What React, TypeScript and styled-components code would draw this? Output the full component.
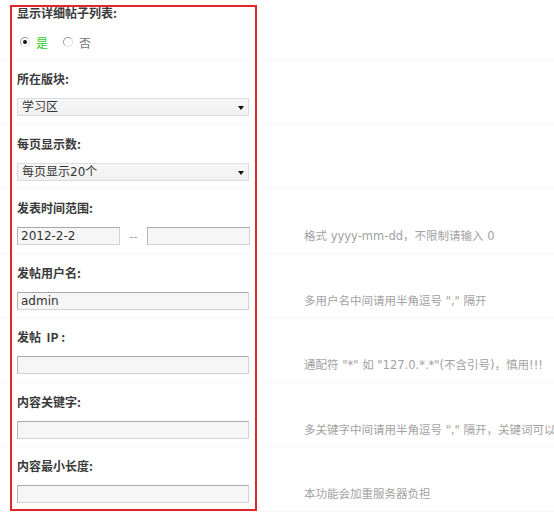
import React from 'react';
import styled, { createGlobalStyle } from 'styled-components';

const GlobalStyle = createGlobalStyle`
  html, body {
    margin: 0;
    padding: 0;
    background: #fff;
    overflow: hidden;
  }
  body {
    font-family: "DejaVu Sans", "Noto Sans CJK SC", sans-serif;
    font-size: 12px;
    color: #333;
  }
`;

type Field = {
  label: string;
  kind: 'radio' | 'select' | 'range' | 'text';
  value?: string;
  hint?: string;
};

const fields: Field[] = [
  { label: '显示详细帖子列表:', kind: 'radio' },
  { label: '所在版块:', kind: 'select', value: '学习区' },
  { label: '每页显示数:', kind: 'select', value: '每页显示20个' },
  { label: '发表时间范围:', kind: 'range', value: '2012-2-2', hint: '格式 yyyy-mm-dd，不限制请输入 0' },
  { label: '发帖用户名:', kind: 'text', value: 'admin', hint: '多用户名中间请用半角逗号 "," 隔开' },
  { label: '发帖  IP :', kind: 'text', hint: '通配符 "*" 如 "127.0.*.*"(不含引号)，慎用!!!' },
  { label: '内容关键字:', kind: 'text', hint: '多关键字中间请用半角逗号 "," 隔开，关键词可以用通配符 "*"' },
  { label: '内容最小长度:', kind: 'text', hint: '本功能会加重服务器负担' },
];

export default function App() {
  return (
    <>
      <GlobalStyle />
      <Page>
        <Table>
          {fields.map((f, i) => (
            <Row key={f.label} $first={i === 0}>
              <Label>{f.label}</Label>
              <Control>
                {f.kind === 'radio' && (
                  <RadioGroup>
                    <RadioLabel $active>
                      <Radio type="radio" name="detail" defaultChecked />
                      是
                    </RadioLabel>
                    <RadioLabel>
                      <Radio type="radio" name="detail" />
                      否
                    </RadioLabel>
                  </RadioGroup>
                )}
                {f.kind === 'select' && (
                  <SelectWrap>
                    <Select defaultValue={f.value}>
                      <option>{f.value}</option>
                    </Select>
                  </SelectWrap>
                )}
                {f.kind === 'range' && (
                  <RangeRow>
                    <TextInput $width={103} defaultValue={f.value} />
                    <Dash>--</Dash>
                    <TextInput $width={103} />
                  </RangeRow>
                )}
                {f.kind === 'text' && <TextInput $width={232} defaultValue={f.value} />}
              </Control>
              {f.hint && <Hint>{f.hint}</Hint>}
            </Row>
          ))}
        </Table>
        <Highlight />
      </Page>
    </>
  );
}

const Page = styled.div`
  position: relative;
  width: 554px;
  height: 513px;
  overflow: hidden;
`;

const Table = styled.div`
  display: flex;
  flex-direction: column;
`;

const Row = styled.div<{ $first?: boolean }>`
  display: grid;
  grid-template-columns: 257px 1fr;
  grid-template-rows: 20px 18px;
  row-gap: ${({ $first }) => ($first ? '10px' : '9px')};
  padding: ${({ $first }) => ($first ? '3px 0 8px 0' : '9px 0 7.5px 0')};
  border-bottom: 1px solid #f8f8f8;
`;

const Label = styled.div`
  grid-column: 1;
  grid-row: 1;
  padding-left: 17px;
  line-height: 20px;
  font-family: "Noto Sans CJK SC", sans-serif;
  font-weight: bold;
  font-size: 12px;
  color: #3a3a3a;
  white-space: pre;
`;

const Control = styled.div`
  grid-column: 1;
  grid-row: 2;
  padding-left: 17px;
  display: flex;
  align-items: center;
`;

const Hint = styled.div`
  grid-column: 2;
  grid-row: 2;
  padding-left: 47px;
  line-height: 18px;
  font-family: "DejaVu Sans", "Noto Sans CJK SC", sans-serif;
  font-size: 11.5px;
  color: #a2a2a2;
  white-space: nowrap;
`;

const RadioGroup = styled.div`
  display: flex;
  align-items: center;
  gap: 15px;
  padding-left: 3px;
`;

const RadioLabel = styled.label<{ $active?: boolean }>`
  display: flex;
  align-items: center;
  gap: 6px;
  font-family: "Noto Sans CJK SC", sans-serif;
  font-size: 12px;
  color: ${({ $active }) => ($active ? '#2ecc2e' : '#777')};
`;

const Radio = styled.input`
  appearance: none;
  margin: 0;
  width: 10px;
  height: 10px;
  border-radius: 50%;
  border: 1px solid #9a9a9a;
  border-right-color: #e0e0e0;
  border-bottom-color: #e0e0e0;
  background: #fff;
  position: relative;

  &:checked::after {
    content: '';
    position: absolute;
    left: 2px;
    top: 2px;
    width: 4px;
    height: 4px;
    border-radius: 50%;
    background: #111;
  }
`;

const SelectWrap = styled.div`
  position: relative;
  width: 232px;
  height: 18px;

  &::after {
    content: '';
    position: absolute;
    right: 5px;
    top: 8px;
    border-left: 3px solid transparent;
    border-right: 3px solid transparent;
    border-top: 4px solid #111;
    pointer-events: none;
  }
`;

const Select = styled.select`
  appearance: none;
  width: 100%;
  height: 18px;
  margin: 0;
  padding: 0 0 0 4px;
  box-sizing: border-box;
  border: 1px solid #dcdcdc;
  border-radius: 0;
  background: linear-gradient(#f7f7f7, #f1f1f1);
  font-family: "DejaVu Sans", "Noto Sans CJK SC", sans-serif;
  font-size: 12px;
  color: #333;
  outline: none;
`;

const RangeRow = styled.div`
  display: flex;
  align-items: center;
`;

const Dash = styled.span`
  width: 27px;
  text-align: center;
  color: #999;
  font-size: 11px;
`;

const TextInput = styled.input<{ $width: number }>`
  width: ${({ $width }) => $width}px;
  height: 18px;
  margin: 0;
  padding: 0 0 0 3px;
  box-sizing: border-box;
  border: 1px solid #d4d4d4;
  border-top-color: #a8a8a8;
  border-left-color: #b4b4b4;
  border-radius: 0;
  background: #f6f6f6;
  font-family: "DejaVu Sans", "Noto Sans CJK SC", sans-serif;
  font-size: 12px;
  color: #333;
  outline: none;
`;

const Highlight = styled.div`
  position: absolute;
  left: 10px;
  top: 5px;
  width: 247px;
  height: 506px;
  box-sizing: border-box;
  border: 2px solid #e3262a;
  pointer-events: none;
`;
